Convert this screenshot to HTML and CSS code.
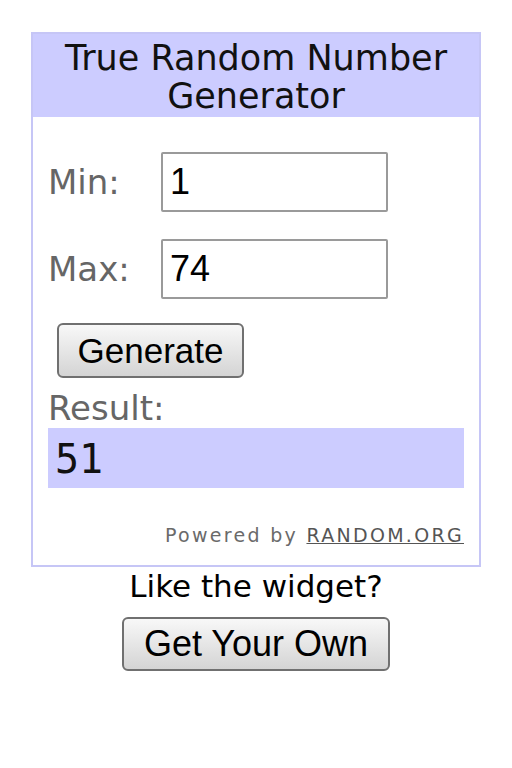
FILE: index.html
```html
<!DOCTYPE html>
<html lang="en">
<head>
  <meta charset="UTF-8" />
  <title>True Random Number Generator</title>
  <link rel="stylesheet" href="styles.css">
</head>
<body>

  <!-- widget box -->
  <div class="rng-widget">
    <div class="rng-title">True Random Number Generator</div>

    <div class="rng-body">
      <div class="rng-row">
        <label class="rng-label" for="minInput">Min:</label>
        <input class="rng-input" type="text" id="minInput" value="1" />
      </div>
      <div class="rng-row">
        <label class="rng-label" for="maxInput">Max:</label>
        <input class="rng-input" type="text" id="maxInput" value="74" />
      </div>

      <button class="rng-btn generate-btn" id="generateBtn">Generate</button>

      <div class="rng-label result-label">Result:</div>
      <div class="rng-result" id="result">51</div>

      <div class="powered">Powered by <a href="#">RANDOM.ORG</a></div>
    </div>
  </div>

  <!-- under the box -->
  <div class="get-own">
    <div class="like-text">Like the widget?</div>
    <button class="rng-btn own-btn">Get Your Own</button>
  </div>

  <script>
    const minInput = document.getElementById('minInput');
    const maxInput = document.getElementById('maxInput');
    const result   = document.getElementById('result');

    document.getElementById('generateBtn').addEventListener('click', () => {
      const min = parseInt(minInput.value, 10);
      const max = parseInt(maxInput.value, 10);
      if (isNaN(min) || isNaN(max) || min > max) {
        result.textContent = '?';
        return;
      }
      result.textContent = min + Math.floor(Math.random() * (max - min + 1));
    });
  </script>
</body>
</html>
```

FILE: styles.css
```css
body {
  margin: 0;
  background: #fff;
  font-family: "DejaVu Sans", Verdana, sans-serif;
  color: #000;
}

/* outer box */
.rng-widget {
  width: 446px;
  margin: 32px 0 0 31px;
  border: 2px solid #c6c6f6;
}

.rng-title {
  background: #ccccff;
  text-align: center;
  font-size: 35px;
  line-height: 38px;
  padding: 5px 0 2px;
  color: #111;
}

.rng-body {
  padding: 35px 15px 18px;
}

.rng-row {
  display: flex;
  align-items: center;
  margin-bottom: 27px;
}

.rng-label {
  display: block;
  width: 113px;
  font-size: 34px;
  line-height: 40px;
  color: #666;
}

.rng-input {
  width: 227px;
  height: 60px;
  box-sizing: border-box;
  border: 2px solid #9a9a9a;
  border-radius: 2px;
  padding: 0 7px;
  font-family: "Liberation Sans", Arial, sans-serif;
  font-size: 36px;
  color: #000;
  background: #fff;
}

/* buttons */
.rng-btn {
  display: block;
  box-sizing: border-box;
  border: 2px solid #707070;
  border-radius: 6px;
  background: linear-gradient(#f8f8f8, #e6e6e6 50%, #d4d4d4);
  font-family: "Liberation Sans", Arial, sans-serif;
  font-size: 35px;
  color: #000;
  padding: 0;
  cursor: pointer;
}

.generate-btn {
  width: 187px;
  height: 55px;
  margin: -3px 0 0 9px;
}

.result-label {
  width: auto;
  margin-top: 10px;
}

.rng-result {
  height: 60px;
  box-sizing: border-box;
  background: #ccccff;
  padding: 2px 7px 0;
  font-family: "DejaVu Sans Mono", monospace;
  font-size: 40px;
  line-height: 58px;
  color: #111;
}

.powered {
  margin-top: 35px;
  text-align: right;
  font-size: 19px;
  line-height: 24px;
  letter-spacing: 2.3px;
  color: #6a6a6a;
}
.powered a {
  color: #555;
  text-decoration: underline;
}

.get-own {
  width: 450px;
  margin-left: 31px;
  text-align: center;
}

.like-text {
  font-size: 31px;
  line-height: 36px;
  margin-top: 1px;
}

.own-btn {
  width: 268px;
  height: 54px;
  margin: 13px auto 0;
  font-size: 36px;
}
```
